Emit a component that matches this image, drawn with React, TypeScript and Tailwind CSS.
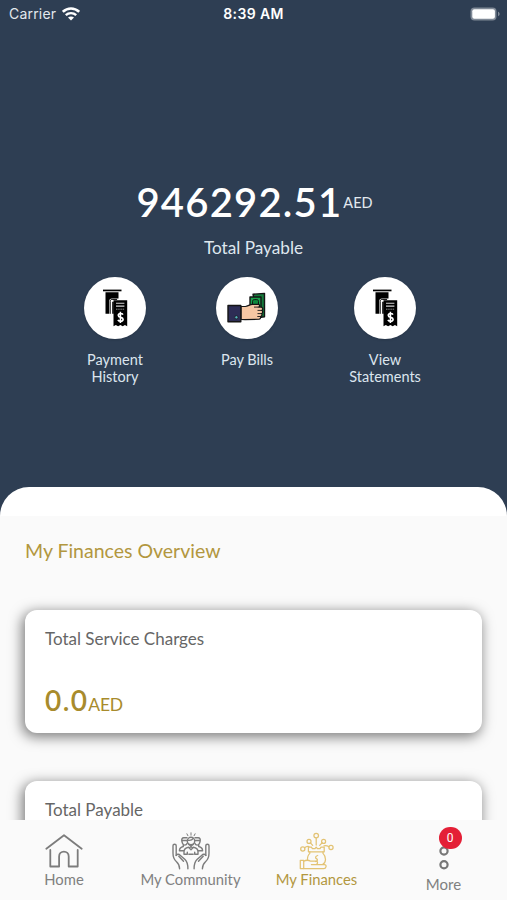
import type { ReactNode } from "react";

function WifiIcon() {
  return (
    <svg viewBox="0 0 18 14" className="h-[14px] w-[18px]" fill="none" stroke="white">
      <path d="M.8 4.9C5.6.3 12.4.3 17.2 4.9" strokeWidth="2.6" />
      <path d="M3.8 8.2c2.9-2.8 7.5-2.8 10.4 0" strokeWidth="2.4" />
      <path d="M9 13.6 6 10.6c1.7-1.6 4.3-1.6 6 0Z" fill="white" stroke="none" />
    </svg>
  );
}

function BatteryIcon() {
  return (
    <svg viewBox="0 0 31 14" className="h-[14px] w-[31px]">
      <rect x=".5" y=".5" width="26" height="13" rx="4" fill="#7f8996" />
      <rect x="2.3" y="2.2" width="22.6" height="9.6" rx="2" fill="white" />
      <path d="M28 4.8c2.2.7 2.2 3.7 0 4.4Z" fill="#7f8996" />
    </svg>
  );
}

function ReceiptIcon() {
  return (
    <svg viewBox="0 0 26 38" className="h-[38px] w-[26px]">
      <path d="M1 .6h18.5v1.7H1Z" />
      <path d="M3.5 3.2h13v6.3H10c-1.8 0-2.8 1-2.8 2.8v12.5H3.5Z" />
      <path d="M8.2 24.8V12.4c0-1.3.6-2 1.9-2h5" fill="none" stroke="#000" strokeWidth="1" />
      <path d="M10.2 24.8V12.8h1.6v12Z" />
      <path d="M11.5 11.2h13.7v26l-2.3-1.2-2.2 1.2-2.3-1.2-2.3 1.2-2.3-1.2-2.3 1.2Z" />
      <path d="M14 14.2h8.4M14 17.1h8.4" stroke="#d4d4d4" strokeWidth="1.1" />
      <path d="M14 20.2h8.4" stroke="#999" strokeWidth=".9" strokeDasharray="1.5 .7" />
      <path
        d="M21 25.6c-.6-.9-1.5-1.2-2.6-1.1-1.3.1-2.1.8-2.1 1.9 0 2.7 4.8 1.2 4.8 3.9 0 1.3-1 2-2.5 2-1.3 0-2.2-.5-2.7-1.5M18.4 22.7v11.4"
        fill="none"
        stroke="white"
        strokeWidth="1.6"
      />
    </svg>
  );
}

function HandMoneyIcon() {
  return (
    <svg viewBox="0 0 40 32" className="h-[32px] w-[40px]" strokeLinejoin="round" stroke="#151515">
      <path d="M26 2.2 37.5 1.4v23.4l-7 1Z" fill="#157a3b" strokeWidth="1.4" />
      <path d="M23 5h11v20l-11 .8Z" fill="#1ba24b" strokeWidth="1.4" />
      <path d="M25.5 14V9.5c0-1.2.7-1.8 1.8-1.9h2.4c1.2 0 1.8.7 1.8 1.8V14" fill="#0f8a3c" strokeWidth="1" />
      <path
        d="M14 14.5h4.3c2.5 0 4.5-2.2 7-2.2h6c1.6.2 2 2.4 0 2.8h3c1.8.4 1.9 3 .3 3.3 1.5.5 1.4 2.8-.2 3.2 1.1.7.6 2.6-.9 2.9.5 1.1-.2 2.5-1.5 2.7L18 27.6 14 27.3Z"
        fill="#f6c7a3"
        strokeWidth="1.2"
      />
      <path d="M31 15.1h-4M30.5 18.4h4M30.5 21.6h3.8M30.3 24.5h3" fill="none" strokeWidth=".9" />
      <path d="M1 13.5h12.8v16.2H1Z" fill="#2d2d55" strokeWidth="1.4" />
      <circle cx="9.4" cy="25.3" r="1.6" fill="#56b6c0" strokeWidth=".7" />
    </svg>
  );
}

function HomeIcon() {
  return (
    <svg
      viewBox="0 0 38 34"
      className="h-[34px] w-[38px]"
      fill="none"
      stroke="#7c7c7c"
      strokeWidth="1.8"
      strokeLinecap="round"
      strokeLinejoin="round"
    >
      <path d="M1.3 14.7 19 1.2l17.7 13.5" />
      <path d="M5.3 16v16.5h8.8V22.4a4.8 4.8 0 0 1 9.6 0v10.1h9V16" />
    </svg>
  );
}

function CommunityIcon() {
  return (
    <svg
      viewBox="0 0 38 38"
      className="h-[38px] w-[38px]"
      fill="none"
      stroke="#7c7c7c"
      strokeWidth="1.4"
      strokeLinecap="round"
      strokeLinejoin="round"
    >
      <path d="M19 .8v2.4M14.9 1.8l1 1.9M23.1 1.8l-1 1.9" strokeWidth="1" />
      <circle cx="19" cy="9" r="3.7" />
      <path d="M15.7 8.2c2.3.5 4.5-.2 5.6-1.9M16.5 12.2c1.3 1.8 3.7 1.8 5 0" />
      <path d="M15 5.8h-3.2c-1.6 0-2.3 1.3-2 3.1.4 2.3 1.3 4.2 3 4.2 1.1 0 1.9-.7 2.4-1.9M10 8.5h5M23 5.8h3.2c1.6 0 2.3 1.3 2 3.1-.4 2.3-1.3 4.2-3 4.2-1.1 0-1.9-.7-2.4-1.9M23 8.5h5" />
      <path d="M11.3 13.1v1.4c-2 .4-3.8 1.4-3.9 4.2h4.4M26.7 13.1v1.4c2 .4 3.8 1.4 3.9 4.2h-4.4" />
      <path d="M12 22.3v-2.7c0-2.3 2-3.7 4.6-4.3l2.4 2.4 2.4-2.4c2.6.6 4.6 2 4.6 4.3v2.7h-2.8M12 22.3h2.8M16.8 22.3h4.4M15.3 22.3v-2M22.7 22.3v-2M17.5 15.8l1.5-1.2 1.5 1.2" />
      <path d="M1 13.8c0-2 3.2-2 3.2 0v9.6M1 13.8v7.5c0 4.2 1 6.3 3.5 8.5 2 1.8 3 4.1 3.1 6.9" />
      <path d="M4.2 23.4c1-1.6 2.8-1.3 4.2 0l4.6 4.2c2.5 2.4 2.9 5.2 2.9 9.1M6.8 24.2l4.7 5.1" />
      <path d="M37 13.8c0-2-3.2-2-3.2 0v9.6M37 13.8v7.5c0 4.2-1 6.3-3.5 8.5-2 1.8-3 4.1-3.1 6.9" />
      <path d="M33.8 23.4c-1-1.6-2.8-1.3-4.2 0L25 27.6c-2.5 2.4-2.9 5.2-2.9 9.1M31.2 24.2l-4.7 5.1" />
    </svg>
  );
}

function FinancesIcon() {
  return (
    <svg
      viewBox="0 0 36 38"
      className="h-[38px] w-[36px]"
      fill="none"
      stroke="#e3c374"
      strokeWidth="1.25"
      strokeLinecap="round"
      strokeLinejoin="round"
    >
      <circle cx="17.2" cy="3.6" r="2.3" />
      <circle cx="10" cy="9.4" r="2" />
      <circle cx="24.6" cy="9.4" r="2" />
      <circle cx="3.8" cy="17" r="2.1" />
      <circle cx="32" cy="15.4" r="2.1" />
      <path d="M17.2 6v7M11.4 10.8l2.3 2.6M23.2 10.8l-2.5 2.6M5.5 15.8c1.5-1.3 3-1.6 4.4-1.3M30 14.8c-1.8-1.2-3.5-1.5-5-1" />
      <path d="M9.4 15.2h3l1 1.4h2.6l1.2-1.4 1.2 1.4H21l1-1.4h3.2v4.6H9.4Z" />
      <path d="M10.8 19.8v1.6c-2 1.8-2.5 4.2-2.3 7M24 19.8v1.6c3.5 3.5 3.2 9-.2 11" />
      <path d="M18.7 23.5c-2.2.5-2.8 2.4-1.3 3.1 1.8.8 1.1 2.7-.9 2.9" />
      <path d="M1.3 28.3h3.4v8.3H1.3Z" />
      <path d="M4.7 29.2c2.2-1.2 4.8-1.2 7 0h5.2c2.2 0 2.2 3.3 0 3.3h-4.5M17.8 32.5h7.6c2.4 0 2.2 4-.4 4H4.7" />
    </svg>
  );
}

type ActionProps = {
  label: string;
  width: string;
  children: ReactNode;
};

function Action({ label, width, children }: ActionProps) {
  return (
    <button type="button" className={`flex flex-col items-center ${width}`}>
      <span className="flex h-[62px] w-[62px] items-center justify-center rounded-full bg-white shadow-sm">
        {children}
      </span>
      <span className="mt-[12px] text-[14.5px] leading-[17px] text-[#dce5ee]">{label}</span>
    </button>
  );
}

function SummaryCard({ title, amount }: { title: string; amount?: string }) {
  return (
    <div className="h-[123px] shrink-0 rounded-[12px] bg-white px-5 pt-[18px] shadow-[-2px_3px_13px_1px_rgba(0,0,0,0.5)]">
      <h3 className="text-[17px] leading-[22px] text-[#666]">{title}</h3>
      {amount ? (
        <p className="mt-[33px] flex items-baseline leading-[34px] text-[#a88b2c]">
          <span className="text-[28px] font-semibold tracking-[1.4px]">{amount}</span>
          <span className="text-[17.5px] tracking-[-0.2px]">AED</span>
        </p>
      ) : null}
    </div>
  );
}

type NavItemProps = {
  label: string;
  width: string;
  active?: boolean;
  children: ReactNode;
};

function NavItem({ label, width, active, children }: NavItemProps) {
  return (
    <button type="button" className={`flex flex-col items-center pt-[12px] ${width}`}>
      <span className="flex h-[38px] items-center">{children}</span>
      <span
        className={`text-[14.8px] leading-[18px] whitespace-nowrap ${active ? "text-[#b2973f]" : "text-[#808080]"}`}
      >
        {label}
      </span>
    </button>
  );
}

export default function App() {
  return (
    <div className="flex h-[900px] w-[507px] flex-col overflow-hidden bg-[#2e3e53] font-['Lato',sans-serif]">
      <div className="grid h-[27px] shrink-0 grid-cols-3 items-center pr-[6px] pl-[9px] font-['Inter',sans-serif] text-[14px] text-white">
        <div className="flex items-center gap-[6px]">
          <span className="tracking-[0.2px] text-[#e3e8ed]">Carrier</span>
          <WifiIcon />
        </div>
        <span className="pr-[3px] text-center font-semibold tracking-[0.35px]">8:39 AM</span>
        <div className="flex justify-end">
          <BatteryIcon />
        </div>
      </div>

      <header className="flex h-[460px] shrink-0 flex-col pt-[150px]">
        <div className="flex justify-center gap-[1px] pl-[2px] text-white">
          <span className="text-[40px] leading-[50px] font-semibold tracking-[1.2px]">946292.51</span>
          <span className="pt-[17px] text-[14.5px] leading-[18px] text-[#e3e9ef]">AED</span>
        </div>
        <p className="mt-[10px] text-center text-[17.2px] leading-[22px] text-[#dfe7ee]">Total Payable</p>
        <div className="mt-[18px] flex items-start justify-between pr-[85px] pl-[84px]">
          <Action label="Payment History" width="w-[62px]">
            <ReceiptIcon />
          </Action>
          <Action label="Pay Bills" width="w-[62px]">
            <HandMoneyIcon />
          </Action>
          <Action label="View Statements" width="w-[74px]">
            <ReceiptIcon />
          </Action>
        </div>
      </header>

      <div className="h-[29px] shrink-0 rounded-t-[29px] bg-white" />

      <main className="flex min-h-0 flex-1 flex-col overflow-hidden bg-[#fafafa] px-[25px] pt-[23px]">
        <h2 className="shrink-0 text-[19.5px] leading-[24px] text-[#b2973f]">My Finances Overview</h2>
        <div className="mt-[47px] flex flex-col gap-12">
          <SummaryCard title="Total Service Charges" amount="0.0" />
          <SummaryCard title="Total Payable" />
        </div>
      </main>

      <nav className="flex h-[80px] shrink-0 bg-[#fafafa]">
        <NavItem label="Home" width="w-[128px]">
          <HomeIcon />
        </NavItem>
        <NavItem label="My Community" width="w-[125px]">
          <CommunityIcon />
        </NavItem>
        <NavItem label="My Finances" width="w-[127px]" active>
          <FinancesIcon />
        </NavItem>
        <button type="button" className="flex w-[127px] flex-col items-center pt-[13px]">
          <span className="relative">
            <svg viewBox="0 0 10 38" className="h-[38px] w-[10px]" fill="none" stroke="#777" strokeWidth="2.2">
              <circle cx="5" cy="5" r="3.6" />
              <circle cx="5" cy="18" r="3.6" />
              <circle cx="5" cy="31.8" r="3.6" />
            </svg>
            <span className="absolute top-[-6px] left-0 flex h-[22px] w-[23px] items-center justify-center rounded-full bg-[#e41f36] font-['Roboto',sans-serif] text-[12px] text-white">
              0
            </span>
          </span>
          <span className="mt-[4px] text-[15px] leading-[18px] text-[#808080]">More</span>
        </button>
      </nav>
    </div>
  );
}
